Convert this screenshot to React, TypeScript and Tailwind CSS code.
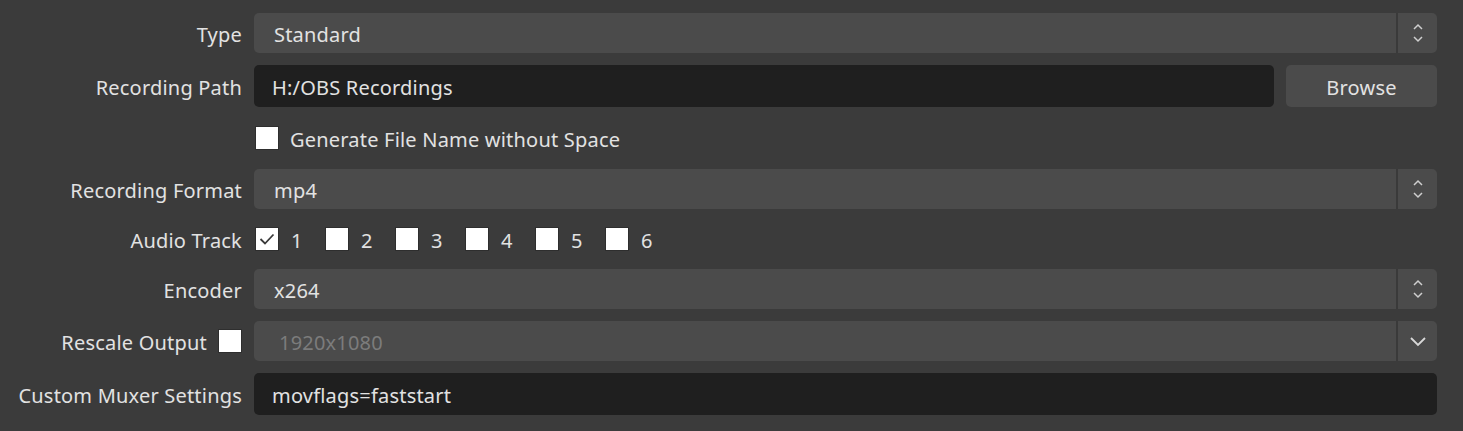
import type { ReactNode } from "react";

const font = { fontFamily: '"Noto Sans", "Open Sans", sans-serif' };

function Label({ children }: { children: ReactNode }) {
  return <div className="w-[230px] shrink-0 text-right whitespace-nowrap pt-[3px]">{children}</div>;
}

function Spinner() {
  return (
    <svg width="14" height="24" viewBox="0 0 14 24" fill="none" stroke="#cfcfcf" strokeWidth="1.5">
      <path d="M3 8 L7 4 L11 8" />
      <path d="M3 16 L7 20 L11 16" />
    </svg>
  );
}

function Chevron() {
  return (
    <svg width="18" height="12" viewBox="0 0 18 12" fill="none" stroke="#d8d8d8" strokeWidth="1.8">
      <path d="M2 3 L9 10 L16 3" />
    </svg>
  );
}

function Combo({ value, arrow = "spin", disabled = false }: { value: string; arrow?: "spin" | "down"; disabled?: boolean }) {
  return (
    <div className="flex-1 h-10 flex rounded-[5px] bg-[#4b4b4b] overflow-hidden">
      <div className={`flex-1 flex items-center pt-[3px] ${disabled ? "pl-[25px] text-[#7c7c7c]" : "pl-[20px]"}`}>{value}</div>
      <div className="w-[2px] bg-[#3a3a3a]" />
      <div className="w-[39px] flex items-center justify-center">
        {arrow === "spin" ? <Spinner /> : <Chevron />}
      </div>
    </div>
  );
}

function Check({ checked = false }: { checked?: boolean }) {
  return (
    <div className="w-[24px] h-[24px] shrink-0 border border-[#2e2e2e] bg-white flex items-center justify-center">
      {checked && (
        <svg width="18" height="18" viewBox="0 0 18 18" fill="none" stroke="#3a3a3a" strokeWidth="1.8">
          <path d="M2.5 9 L7 13.5 L15.5 4.5" />
        </svg>
      )}
    </div>
  );
}

export default function App() {
  return (
    <div className="w-[1463px] h-[431px] bg-[#3b3b3b] text-[#e2e2e2] text-[20px] tracking-[0.2px] pl-[12px] pr-[26px] pt-[13px]" style={font}>
      <div className="flex items-center gap-[12px] h-10">
        <Label>Type</Label>
        <Combo value="Standard" />
      </div>
      <div className="flex items-center gap-[12px] h-[42px] mt-[12px]">
        <Label>Recording Path</Label>
        <div className="flex-1 h-[42px] flex items-center rounded-[5px] bg-[#1f1f1f] pl-[18px] pt-[3px]">H:/OBS Recordings</div>
        <div className="w-[151px] h-[42px] flex items-center justify-center rounded-[5px] bg-[#4b4b4b] pt-[3px]">Browse</div>
      </div>
      <div className="flex items-center gap-[12px] h-[62px]">
        <Label>{""}</Label>
        <div className="flex items-center gap-[11px] pl-[1px]">
          <Check />
          <span className="pt-[3px]">Generate File Name without Space</span>
        </div>
      </div>
      <div className="flex items-center gap-[12px] h-10">
        <Label>Recording Format</Label>
        <Combo value="mp4" />
      </div>
      <div className="flex items-center gap-[12px] h-[60px]">
        <Label>Audio Track</Label>
        <div className="flex items-center pl-[1px]">
          {["1", "2", "3", "4", "5", "6"].map((n, i) => (
            <div key={n} className="flex items-center gap-[12px] w-[70px]">
              <Check checked={i === 0} />
              <span className="pt-[3px]">{n}</span>
            </div>
          ))}
        </div>
      </div>
      <div className="flex items-center gap-[12px] h-10">
        <Label>Encoder</Label>
        <Combo value="x264" />
      </div>
      <div className="flex items-center gap-[12px] h-10 mt-[12px]">
        <div className="w-[230px] shrink-0 flex items-center justify-end gap-[11px] whitespace-nowrap">
          <span className="pt-[3px]">Rescale Output</span>
          <Check />
        </div>
        <Combo value="1920x1080" arrow="down" disabled />
      </div>
      <div className="flex items-center gap-[12px] h-[42px] mt-[12px]">
        <Label>Custom Muxer Settings</Label>
        <div className="flex-1 h-[42px] flex items-center rounded-[5px] bg-[#1f1f1f] pl-[18px] pt-[3px]">movflags=faststart</div>
      </div>
    </div>
  );
}
